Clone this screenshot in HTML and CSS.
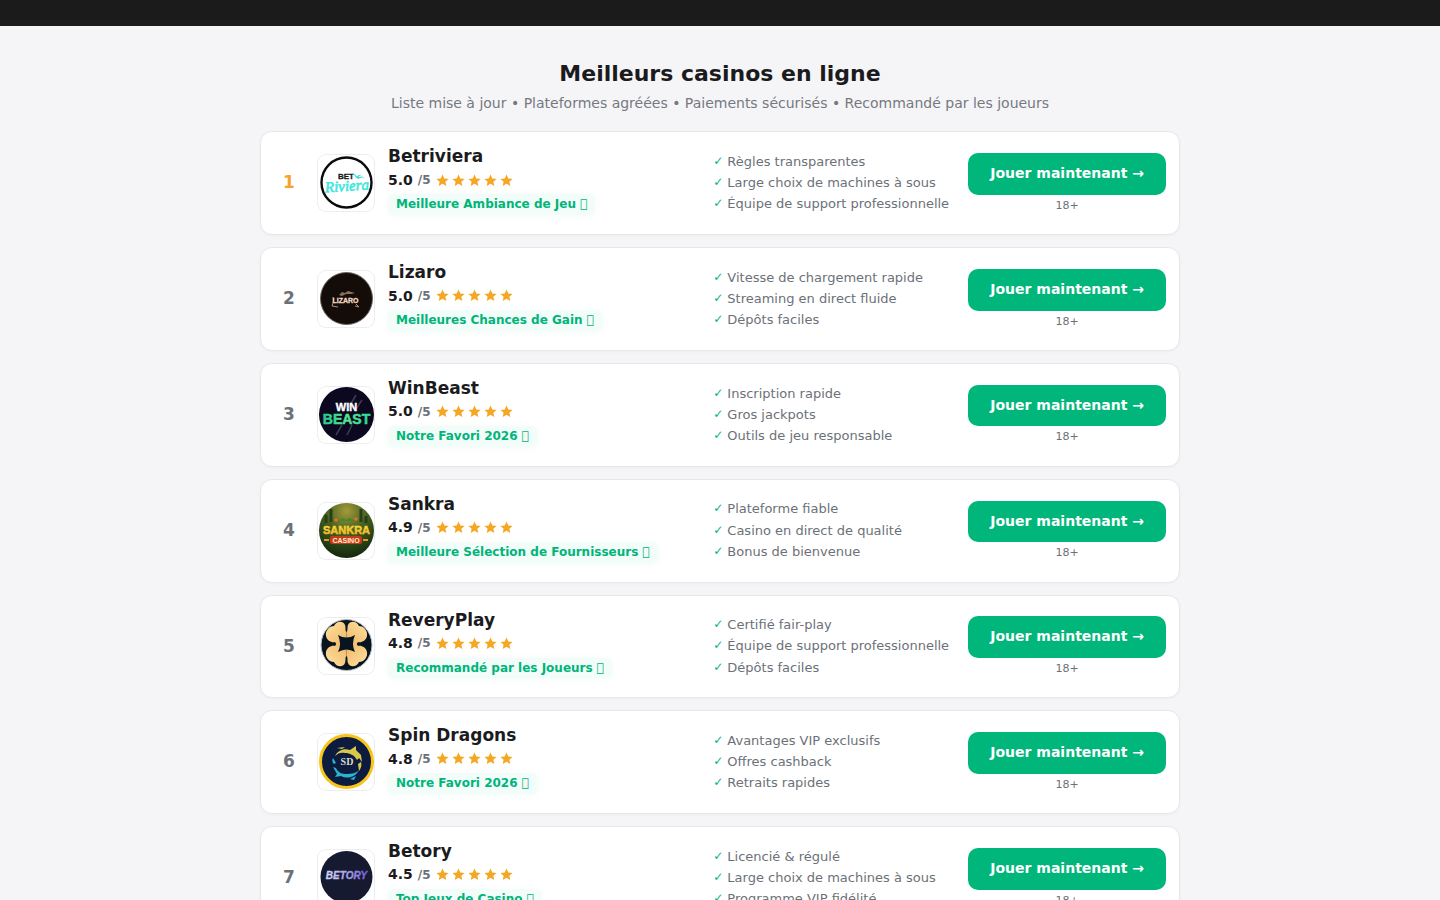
FILE: index.html
```html
<!DOCTYPE html>
<html lang="fr">
<head>
<meta charset="utf-8">
<meta name="viewport" content="width=device-width, initial-scale=1">
<title>Meilleurs casinos en ligne</title>
<link rel="stylesheet" href="styles.css">
</head>
<body>
<svg class="defs" width="0" height="0" aria-hidden="true">
  <defs>
    <symbol id="star" viewBox="0 0 24 24"><path d="M12 1l3.300 7.300 7.900.8-5.900 5.300 1.700 7.800-7-4-7 4 1.700-7.800L.8 9.100l7.900-.8z"/></symbol>
    <symbol id="stars" viewBox="0 0 78 14">
      <use href="#star" x="0" y="0" width="13" height="13"/>
      <use href="#star" x="16" y="0" width="13" height="13"/>
      <use href="#star" x="32" y="0" width="13" height="13"/>
      <use href="#star" x="48" y="0" width="13" height="13"/>
      <use href="#star" x="64" y="0" width="13" height="13"/>
    </symbol>
    <radialGradient id="jungle" cx=".5" cy=".15" r=".85"><stop offset="0" stop-color="#a39a3a"/><stop offset=".45" stop-color="#46601f"/><stop offset="1" stop-color="#12280e"/></radialGradient>
    <linearGradient id="gold" x1="0" y1="0" x2="0" y2="1"><stop offset="0" stop-color="#ffe23c"/><stop offset="1" stop-color="#eeb022"/></linearGradient>
    <linearGradient id="mint" x1="0" y1="0" x2="1" y2="0"><stop offset="0" stop-color="#22c98c"/><stop offset=".5" stop-color="#55e88e"/><stop offset="1" stop-color="#2bd99a"/></linearGradient>
    <linearGradient id="violet" x1="0" y1="0" x2="1" y2="0"><stop offset="0" stop-color="#d8d8ee"/><stop offset=".5" stop-color="#aaa2e6"/><stop offset="1" stop-color="#6f5ad8"/></linearGradient>
    <linearGradient id="petal" gradientUnits="userSpaceOnUse" x1="8" y1="6" x2="28" y2="26"><stop offset="0" stop-color="#ffe0a0"/><stop offset="1" stop-color="#f0b868"/></linearGradient>
    <g id="leaf"><path d="M28.500 27V14C27 13 28 10 27 7 25 2 18 3 16 8 11 8 7 13 8 18c1 5 6 7 9 6l2 3z" fill="url(#petal)"/></g>
  </defs>
</svg>
<header class="topbar"></header>
<main class="page">
  <h1 class="title">Meilleurs casinos en ligne</h1>
  <p class="subtitle">Liste mise à jour • Plateformes agréées • Paiements sécurisés • Recommandé par les joueurs</p>
  <div class="list">

    <article class="card">
      <div class="rank rank-first">1</div>
      <div class="logo"><svg viewBox="0 0 56 56" aria-hidden="true">
        <circle cx="28.500" cy="27.500" r="25" fill="#fff" stroke="#0b0b0b" stroke-width="2.400"/>
        <text x="20" y="24" class="lg" font-size="8" fill="#16181a" stroke="#16181a" stroke-width=".3">BET</text>
        <path d="M38 23c1-3 4-4 6-3-2 0-3 1-4 3zm1 0c3-2 6-2 9 0-3-1-6 0-8 1zm-1 0c-1-3-3-4-5-4 3-1 5 1 6 3z" fill="#3ddfd2"/>
        <text x="7" y="36" class="lg-script" font-size="15" fill="#3ee5dc" stroke="#3ee5dc" stroke-width=".6" transform="rotate(-4 28 33)">Riviera</text>
      </svg></div>
      <div class="info">
        <h2 class="name">Betriviera</h2>
        <div class="rating"><b>5.0</b><span class="max">/5</span><svg class="stars" role="img" aria-label="5 étoiles"><use href="#stars"/></svg></div>
        <span class="badge">Meilleure Ambiance de Jeu &#x10FF00;</span>
      </div>
      <ul class="features"><li>Règles transparentes</li><li>Large choix de machines à sous</li><li>Équipe de support professionnelle</li></ul>
      <div class="action"><a class="play" href="#">Jouer maintenant →</a><span class="age">18+</span></div>
    </article>

    <article class="card">
      <div class="rank">2</div>
      <div class="logo"><svg viewBox="0 0 56 56" aria-hidden="true">
        <circle cx="28.500" cy="27.500" r="26" fill="#130c08" stroke="#6b6460" stroke-width="1"/>
        <path d="M21 24l3-3 3 1 3-2 7 2-4 1h-5l-4 2z" fill="#8d6f58"/>
        <path d="M15 26c1 4 0 6-1 9l6 1m18-3l3 3-4-1" fill="none" stroke="#b98f6c" stroke-width="1"/>
        <text x="27.500" y="31.500" text-anchor="middle" class="lg" font-size="7" fill="#f0d8c2" stroke="#f0d8c2" stroke-width=".3">LIZARO</text>
      </svg></div>
      <div class="info">
        <h2 class="name">Lizaro</h2>
        <div class="rating"><b>5.0</b><span class="max">/5</span><svg class="stars" role="img" aria-label="5 étoiles"><use href="#stars"/></svg></div>
        <span class="badge">Meilleures Chances de Gain &#x10FF00;</span>
      </div>
      <ul class="features"><li>Vitesse de chargement rapide</li><li>Streaming en direct fluide</li><li>Dépôts faciles</li></ul>
      <div class="action"><a class="play" href="#">Jouer maintenant →</a><span class="age">18+</span></div>
    </article>

    <article class="card">
      <div class="rank">3</div>
      <div class="logo"><svg viewBox="0 0 56 56" aria-hidden="true">
        <circle cx="28.500" cy="27.500" r="27.500" fill="#0b0820"/>
        <path d="M38 8l-7 12M44 13l-6 9M24 38l-6 10M34 38l-5 10" stroke="#3a3f54" stroke-width="1.500"/>
        <text x="28.500" y="24" text-anchor="middle" class="lg" font-size="11" fill="#fff" stroke="#fff" stroke-width=".4">WIN</text>
        <text x="28.500" y="36.500" text-anchor="middle" class="lg" font-size="14" fill="url(#mint)" stroke="url(#mint)" stroke-width=".5">BEAST</text>
      </svg></div>
      <div class="info">
        <h2 class="name">WinBeast</h2>
        <div class="rating"><b>5.0</b><span class="max">/5</span><svg class="stars" role="img" aria-label="5 étoiles"><use href="#stars"/></svg></div>
        <span class="badge">Notre Favori 2026 &#x10FF00;</span>
      </div>
      <ul class="features"><li>Inscription rapide</li><li>Gros jackpots</li><li>Outils de jeu responsable</li></ul>
      <div class="action"><a class="play" href="#">Jouer maintenant →</a><span class="age">18+</span></div>
    </article>

    <article class="card">
      <div class="rank">4</div>
      <div class="logo"><svg viewBox="0 0 56 56" aria-hidden="true">
        <circle cx="28.500" cy="27.500" r="27.500" fill="url(#jungle)"/>
        <path d="M13 6v13M43 6v13M8 12v8M48 13v7" stroke="#25401a" stroke-width="3"/>
        <path d="M21 18l4-3 3 2 4-2 4 3z" fill="#3f8a2a"/>
        <circle cx="18" cy="17" r="1.800" fill="#e2702a"/><circle cx="38" cy="16" r="1.800" fill="#e2702a"/>
        <text x="28.500" y="30.500" text-anchor="middle" class="lg" font-size="11" fill="url(#gold)" stroke="url(#gold)" stroke-width=".5">SANKRA</text>
        <rect x="12" y="33" width="32" height="8" rx="2" fill="#c43a1c"/>
        <path d="M6 37h5M45 37h5" stroke="#d89a2a" stroke-width="2"/>
        <text x="28" y="39.500" text-anchor="middle" class="lg" font-size="7" fill="#fff1c8">CASINO</text>
      </svg></div>
      <div class="info">
        <h2 class="name">Sankra</h2>
        <div class="rating"><b>4.9</b><span class="max">/5</span><svg class="stars" role="img" aria-label="5 étoiles"><use href="#stars"/></svg></div>
        <span class="badge">Meilleure Sélection de Fournisseurs &#x10FF00;</span>
      </div>
      <ul class="features"><li>Plateforme fiable</li><li>Casino en direct de qualité</li><li>Bonus de bienvenue</li></ul>
      <div class="action"><a class="play" href="#">Jouer maintenant →</a><span class="age">18+</span></div>
    </article>

    <article class="card">
      <div class="rank">5</div>
      <div class="logo"><svg viewBox="0 0 56 56" aria-hidden="true">
        <circle cx="28.500" cy="27" r="25.500" fill="#081420" stroke="#b9c0c4" stroke-width="1"/>
        <use href="#leaf"/>
        <use href="#leaf" transform="translate(57 0) scale(-1 1)"/>
        <use href="#leaf" transform="translate(0 52) scale(1 -1)"/>
        <use href="#leaf" transform="translate(57 52) scale(-1 -1)"/>
        <path d="M20 17q8.500 5 17 0-4 9 0 17-8.500-5-17 0 4-8 0-17z" fill="#081420"/>
      </svg></div>
      <div class="info">
        <h2 class="name">ReveryPlay</h2>
        <div class="rating"><b>4.8</b><span class="max">/5</span><svg class="stars" role="img" aria-label="5 étoiles"><use href="#stars"/></svg></div>
        <span class="badge">Recommandé par les Joueurs &#x10FF00;</span>
      </div>
      <ul class="features"><li>Certifié fair-play</li><li>Équipe de support professionnelle</li><li>Dépôts faciles</li></ul>
      <div class="action"><a class="play" href="#">Jouer maintenant →</a><span class="age">18+</span></div>
    </article>

    <article class="card">
      <div class="rank">6</div>
      <div class="logo"><svg viewBox="0 0 56 56" aria-hidden="true">
        <circle cx="28.500" cy="27.500" r="26" fill="#0d1b3e" stroke="#f7c41c" stroke-width="3"/>
        <path d="M17 22c3-6 9-8 15-6l6-4v4l5 5 1 7-3-4-2 2c-3-5-7-7-12-7-4-1-7 0-10 3z" fill="#d8c84a"/>
        <path d="M24 15l-5-1 8-1zM43 28c1 3 0 6-2 9l-1-7z" fill="#d8c84a"/>
        <path d="M41 36c-4 8-12 9-18 6l-6 1 2-3-4-7 3 1c2 5 6 6 11 6 5 0 9-1 12-4z" fill="#29b4cf"/>
        <path d="M16 30c-2-2-2-4-1-6l3 5zM32 45l6-3-2 4z" fill="#29b4cf"/>
        <text x="29" y="31" text-anchor="middle" class="lg-serif" font-size="10" fill="#d6dccb">SD</text>
      </svg></div>
      <div class="info">
        <h2 class="name">Spin Dragons</h2>
        <div class="rating"><b>4.8</b><span class="max">/5</span><svg class="stars" role="img" aria-label="5 étoiles"><use href="#stars"/></svg></div>
        <span class="badge">Notre Favori 2026 &#x10FF00;</span>
      </div>
      <ul class="features"><li>Avantages VIP exclusifs</li><li>Offres cashback</li><li>Retraits rapides</li></ul>
      <div class="action"><a class="play" href="#">Jouer maintenant →</a><span class="age">18+</span></div>
    </article>

    <article class="card">
      <div class="rank">7</div>
      <div class="logo"><svg viewBox="0 0 56 56" aria-hidden="true">
        <circle cx="28.500" cy="27" r="26" fill="#151a30"/>
        <text x="28.500" y="28.500" text-anchor="middle" class="lg-slant" font-size="10" fill="url(#violet)" stroke="url(#violet)" stroke-width=".3">BETORY</text>
      </svg></div>
      <div class="info">
        <h2 class="name">Betory</h2>
        <div class="rating"><b>4.5</b><span class="max">/5</span><svg class="stars" role="img" aria-label="5 étoiles"><use href="#stars"/></svg></div>
        <span class="badge">Top Jeux de Casino &#x10FF00;</span>
      </div>
      <ul class="features"><li>Licencié &amp; régulé</li><li>Large choix de machines à sous</li><li>Programme VIP fidélité</li></ul>
      <div class="action"><a class="play" href="#">Jouer maintenant →</a><span class="age">18+</span></div>
    </article>
  </div>
</main>
</body>
</html>
```
FILE: styles.css
```css
* { box-sizing: border-box; }
html { scrollbar-width: none; }
body {
  margin: 0;
  background: #f5f5f8;
  color: #1b1b1d;
  font-family: "DejaVu Sans", sans-serif;
  font-size: 14px;
  line-height: 1.4;
}
.defs { position: absolute; }
.topbar { height: 26px; background: #1b1b1b; }
.page { max-width: 944px; margin: 0 auto; padding: 33px 12px; }
.title { margin: 0 0 4px; font-size: 22px; font-weight: 700; text-align: center; }
.subtitle { margin: 0 0 18px; color: #75797f; text-align: center; }
.list { display: flex; flex-direction: column; gap: 12px; }
.card {
  display: grid;
  grid-template-columns: 30px 56px 1fr 241px auto;
  gap: 14px;
  align-items: center;
  padding: 14px 13px;
  background: #fff;
  border: 1px solid #e6e7e9;
  border-radius: 12px;
  box-shadow: 0 1px 3px rgba(0, 0, 0, .03);
}
.rank { color: #6c7178; font-size: 17px; font-weight: 700; text-align: center; }
.rank-first { color: #f3a52b; }
.logo {
  height: 56px;
  border-radius: 8px;
  box-shadow: 0 0 0 1px #ededf0;
  overflow: hidden;
}
.logo svg { display: block; width: 100%; height: 100%; }
.lg { font-family: "Liberation Sans", sans-serif; font-weight: 700; }
.lg-script { font-family: "Liberation Serif", serif; font-style: italic; }
.lg-serif { font-family: "Liberation Serif", serif; font-weight: 700; }
.lg-slant { font-family: "Liberation Sans", sans-serif; font-style: italic; font-weight: 700; }
.info { display: flex; flex-direction: column; align-items: flex-start; gap: 4px; padding-bottom: 5px; }
.name { margin: 0; font-size: 17px; font-weight: 700; line-height: 1.2; }
.rating { display: flex; align-items: center; gap: 5px; }
.max { color: #6c7178; font-size: 12px; font-weight: 700; }
.stars { width: 78px; height: 14px; fill: #f5a623; }
.badge {
  padding: 2px 8px;
  border-radius: 6px;
  background: #f2fcf8;
  box-shadow: 0 1px 6px rgba(0, 184, 122, .06);
  color: #00b47a;
  font-size: 12px;
  font-weight: 700;
}
.features { display: flex; flex-direction: column; gap: 3px; margin: 0; padding: 0; list-style: none; color: #6c7178; font-size: 13px; white-space: nowrap; }
.features li { display: flex; gap: 4px; }
.features li::before { content: "✓"; color: #00b47a; font-size: 12px; }
.action { display: flex; flex-direction: column; align-items: center; gap: 3px; }
.play {
  padding: 11px 22px;
  border-radius: 10px;
  background: #00b67a;
  color: #fff;
  font-weight: 700;
  text-decoration: none;
  white-space: nowrap;
}
.age { color: #6c7178; font-size: 11px; }
@media (max-width: 860px) {
  .card { grid-template-columns: 30px 56px 1fr; }
  .features, .action { grid-column: 1 / -1; }
}
```
